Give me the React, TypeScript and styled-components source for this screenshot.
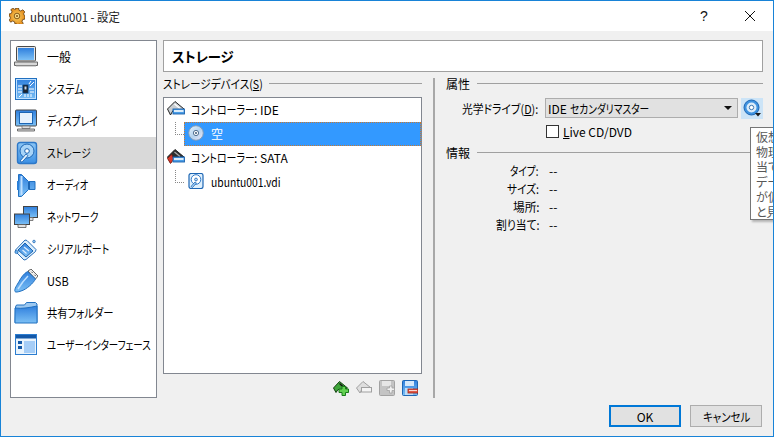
import { FC, ReactNode } from 'react';
import styled, { createGlobalStyle } from 'styled-components';

const GlobalStyle = createGlobalStyle`
  html, body {
    margin: 0;
    padding: 0;
    background: #f0f0f0;
  }
  * {
    box-sizing: border-box;
  }
  body {
    font-family: "Noto Sans CJK JP", "Noto Sans", sans-serif;
    font-size: 12px;
    font-feature-settings: "palt";
    color: #000;
  }
`;

const Window = styled.div`
  position: relative;
  display: flex;
  flex-direction: column;
  width: 774px;
  height: 437px;
  overflow: hidden;
  border: 1px solid #1883d7;
  background: #f0f0f0;
`;

const TitleBar = styled.div`
  display: flex;
  align-items: center;
  height: 30px;
  padding-left: 8px;
  background: #fff;
`;

const TitleText = styled.span`
  flex: 1;
  margin-left: 5px;
  font-size: 12px;
  color: #222;
`;

const CaptionButton = styled.div`
  display: flex;
  align-items: center;
  justify-content: center;
  width: 46px;
  height: 30px;
  font-family: "Liberation Sans", sans-serif;
  font-size: 14px;
  color: #111;
`;

const Content = styled.div`
  display: grid;
  grid-template-columns: 147px 1fr;
  gap: 6px;
  height: 358px;
  margin: 9px 10px 0 9px;
`;

const Sidebar = styled.div`
  background: #fff;
  border: 1px solid #828790;
`;

const SideItem = styled.div<{ $active?: boolean }>`
  display: flex;
  align-items: center;
  height: 32px;
  padding-left: 3px;
  background: ${p => (p.$active ? '#d9d9d9' : 'transparent')};
`;

const SideIcon = styled.span`
  display: block;
  flex: none;
  width: 24px;
  height: 24px;
  margin-right: 9px;
`;

// the reference font has much narrower kana than Noto; $w is the width left in the flow
const Narrow = styled.span<{ $s: number; $w?: number }>`
  display: inline-block;
  ${p => (p.$w ? `width: ${p.$w}px;` : '')}
  white-space: nowrap;
  transform: scaleX(${p => p.$s});
  transform-origin: left center;
`;

const SideLabel = styled(Narrow)`
  margin-bottom: 2px;
`;

const Main = styled.div`
  display: flex;
  flex-direction: column;
  min-width: 0;
`;

const PageTitle = styled.div`
  display: flex;
  align-items: center;
  height: 32px;
  padding-left: 8px;
  background: #fff;
  border: 1px solid #a0a0a0;
  font-size: 14px;
  font-weight: 700;
`;

const Split = styled.div`
  flex: 1;
  display: grid;
  grid-template-columns: 259px 2px 317px;
  column-gap: 11px;
  min-height: 0;
`;

const LeftPane = styled.div`
  display: flex;
  flex-direction: column;
  min-height: 0;
`;

const Separator = styled.div`
  margin-top: 6px;
  background: #a8a8a8;
`;

const RightPane = styled.div`
  display: flex;
  flex-direction: column;
`;

const GroupHeader = styled.div<{ $height?: number; $drop?: number }>`
  display: flex;
  flex: none;
  align-items: center;
  gap: 7px;
  height: ${p => p.$height ?? 25}px;
  padding-bottom: ${p => p.$drop ?? 2}px;
  white-space: nowrap;

  &::after {
    content: '';
    flex: 1;
    height: 1px;
    background: #a0a0a0;
  }
`;

const Tree = styled.div`
  flex: 1;
  background: #fff;
  border: 1px solid #828790;
`;

const TreeRow = styled.div`
  display: flex;
  align-items: center;
  height: 24px;
  padding: 0 0 2px 3px;
  white-space: nowrap;
`;

const ChildRow = styled.div`
  display: flex;
  align-items: flex-start;
  height: 24px;
  padding-left: 11px;
  white-space: nowrap;
`;

const Elbow = styled.span`
  flex: none;
  width: 9px;
  height: 13px;
  border-left: 1px dotted #888;
  border-bottom: 1px dotted #888;
`;

const ChildBody = styled.div<{ $selected?: boolean }>`
  flex: 1;
  display: flex;
  align-items: center;
  height: 24px;
  padding: 0 0 2px 4px;
  background: ${p => (p.$selected ? '#3399ff' : 'transparent')};
  color: ${p => (p.$selected ? '#fff' : '#000')};
  outline: ${p => (p.$selected ? '1px dotted #c9792f' : 'none')};
  outline-offset: -1px;
`;

const ParentIcon = styled.span`
  display: block;
  flex: none;
  width: 18px;
  height: 18px;
  margin-right: 6px;
`;

const ChildIcon = styled.span`
  display: block;
  flex: none;
  width: 16px;
  height: 16px;
  margin-right: 7px;
`;

const ToolRow = styled.div`
  display: flex;
  flex: none;
  justify-content: flex-end;
  align-items: center;
  gap: 7px;
  height: 24px;
  padding: 3px 4px 0 0;
`;

const ToolIcon = styled.span`
  display: block;
  width: 16px;
  height: 16px;
`;

const PropGrid = styled.div`
  display: grid;
  grid-template-columns: 93px 1fr;
  column-gap: 6px;
  align-items: center;
`;

const PropLabel = styled.span`
  text-align: right;
  white-space: nowrap;
`;

const DriveRow = styled.div`
  display: flex;
  align-items: center;
  gap: 3px;
  height: 22px;
`;

const Combo = styled.div`
  flex: 1;
  display: flex;
  align-items: center;
  height: 20px;
  padding: 0 5px 0 2px;
  background: #e1e1e1;
  border: 1px solid #adadad;
  white-space: nowrap;
`;

const ComboText = styled.span`
  flex: 1;
`;

const ComboArrow = styled.span`
  width: 0;
  height: 0;
  border-left: 4px solid transparent;
  border-right: 4px solid transparent;
  border-top: 4px solid #111;
`;

const PickerButton = styled.div`
  display: flex;
  align-items: center;
  justify-content: center;
  flex: none;
  width: 22px;
  height: 21px;
  background: #cce4f7;
`;

const CheckRow = styled.label`
  display: flex;
  align-items: center;
  gap: 4px;
  height: 21px;
  margin: 2px 0 1px;
`;

const CheckBox = styled.span`
  display: block;
  width: 13px;
  height: 13px;
  margin-left: 1px;
  background: #fff;
  border: 1px solid #333;
`;

const Mnemonic = styled.span`
  text-decoration: underline;
`;

const InfoGrid = styled(PropGrid)`
  grid-auto-rows: 18px;
`;

const InfoValue = styled.span`
  padding-left: 4px;
`;

const Tooltip = styled.div`
  position: absolute;
  top: 126px;
  left: 749px;
  width: 60px;
  height: 93px;
  padding: 1px 5px;
  overflow: hidden;
  background: #fff;
  border: 1px solid #767676;
  box-shadow: 2px 2px 2px rgba(0, 0, 0, 0.25);
  color: #575757;
  font-size: 12px;
  line-height: 15px;
  white-space: nowrap;
`;

const Footer = styled.div`
  display: flex;
  justify-content: flex-end;
  gap: 9px;
  margin: 7px 11px 0 0;
`;

const Button = styled.div<{ $primary?: boolean }>`
  display: flex;
  align-items: center;
  justify-content: center;
  width: 72px;
  height: 22px;
  background: #e1e1e1;
  border: ${p => (p.$primary ? '2px solid #0078d7' : '1px solid #adadad')};
`;

const Defs = styled.svg`
  display: block;
  width: 0;
  height: 0;
`;

const Svg: FC<{ size?: number; children: ReactNode }> = ({ size = 24, children }) => (
  <svg width={size} height={size} viewBox={`0 0 ${size} ${size}`} style={{ display: 'block' }}>
    {children}
  </svg>
);

const G = 'url(#blueGrad)';
const L = 'url(#lightGrad)';

const GearIcon = () => (
  <Svg size={16}>
    <path
      d="M6.500 0h3l.5 2.200 1.800.8L13.800 1.800l2 2-1.200 2 .8 1.800 .6 .4v3l-2.200 .5-.8 1.800 1.200 2-2 2-2-1.200-1.800 .8L8 16H6l-.5-2.200-1.800-.8-2 1.200-1.500-2 1.200-2L1 8.400 0 8V6l2.200-.5.8-1.800-1.200-2 2-1.500 2 1.200L7 1z"
      fill="url(#gearGrad)"
      stroke="#5e3b0c"
      strokeWidth="0.8"
    />
    <circle cx="8" cy="8" r="2.800" fill="#f9e08c" stroke="#7a4c10" strokeWidth="0.9" />
    <circle cx="8" cy="8" r="1.100" fill="#8f5a16" />
  </Svg>
);

const LaptopIcon = () => (
  <Svg>
    <rect x="2.500" y="1.500" width="19" height="14.500" rx="1" fill="#e6e6e6" stroke="#4a4a4a" />
    <rect x="4" y="3" width="16" height="12" fill={G} />
    <path d="M0.500 17h23v3.500H0.500z" fill="#d8d8d8" stroke="#666" />
    <path d="M2 21h20" stroke="#aaa" />
  </Svg>
);

const SystemIcon = () => (
  <Svg>
    <rect x="1.500" y="1.500" width="21" height="21" fill={G} stroke="#2170c0" />
    <rect x="2.500" y="2.500" width="19" height="19" fill="none" stroke="#bfe0ff" />
    <rect x="9" y="8" width="5" height="8" fill="#1c2430" stroke="#0c3c70" strokeWidth="0.8" />
    <rect x="10.500" y="9.500" width="2" height="3" fill="#c9d6e4" />
    <path d="M4 9h4M4 12h4M4 15h4M15 12h5M16 9l4-4M16 15h4M15 7l2-3M5 20l3-3M14 17v3M17 17v3M11 17v3" stroke="#fff" />
  </Svg>
);

const DisplayIcon = () => (
  <Svg>
    <rect x="1.500" y="1" width="21" height="16" rx="1" fill={G} stroke="#4a4a4a" />
    <rect x="5.500" y="3.500" width="13" height="11" fill="#e6f2fd" stroke="#1d66b4" />
    <path d="M8 17h8v2.500H8z" fill="#ddd" stroke="#777" strokeWidth="0.8" />
    <path d="M3.500 20h17v2h-17z" fill="#d8d8d8" stroke="#555" strokeWidth="0.8" />
  </Svg>
);

const DiskIcon = () => (
  <Svg>
    <rect x="3.500" y="1.500" width="19" height="21" rx="2.500" fill={L} stroke="#2d78c8" strokeWidth="1.400" />
    <circle cx="13" cy="10" r="7" fill="#a8d4f8" stroke="#1d66b4" />
    <circle cx="13" cy="10" r="2.300" fill="#fff" stroke="#1d66b4" />
    <path d="M6 20l6-7 2 1.600-6 6.600z" fill="#e8f3fd" stroke="#1d66b4" strokeWidth="0.9" />
  </Svg>
);

const PaleDiskIcon = () => (
  <Svg size={16}>
    <rect x="1" y="0.500" width="14" height="15" rx="2" fill="#dff0fd" stroke="#1d66b4" strokeWidth="1.200" />
    <circle cx="8" cy="6.500" r="4.800" fill="#fff" stroke="#2d78c8" />
    <circle cx="8" cy="6.500" r="1.400" fill="#bfe0fb" stroke="#1d66b4" strokeWidth="0.8" />
    <path d="M3 13.500l4-4.500 1.500 1-4 4.500z" fill="#a8d4f8" stroke="#1d66b4" strokeWidth="0.8" />
  </Svg>
);

const AudioIcon = () => (
  <Svg>
    <path d="M4.500 1.500h3l7 7h6.500v8h-6.500l-7 7h-3z" fill={G} stroke="#2170c0" />
    <rect x="6.500" y="3" width="2" height="19" fill="#bfe0ff" />
    <rect x="14" y="9" width="2" height="7" fill="#1d66b4" />
    <rect x="3" y="8" width="2" height="9" fill="#2c80d8" />
  </Svg>
);

const NetworkIcon = () => (
  <Svg>
    <rect x="9.500" y="1.500" width="14" height="11" fill={G} stroke="#444" />
    <path d="M14 12.500h5v3h-5z" fill="#ddd" stroke="#666" strokeWidth="0.8" />
    <rect x="0.500" y="9" width="15" height="10.500" fill={G} stroke="#444" />
    <path d="M4 19.500h8v3H4z" fill="#e2e2e2" stroke="#555" strokeWidth="0.8" />
  </Svg>
);

const SerialIcon = () => (
  <Svg>
    <path d="M1.500 13L11 3l2 .5 9 9-.5 2-9.500 8-2 .5-8-8z" fill="#dbeefc" stroke="#2b6fb8" />
    <path d="M4 13l7-7 8 8-7 6z" fill={G} stroke="#1c62ad" />
    <circle cx="2.500" cy="15" r="1.600" fill="#6bb2ef" stroke="#1c62ad" strokeWidth="0.7" />
    <circle cx="20" cy="4.500" r="1.300" fill="#8dc5f2" stroke="#1c62ad" strokeWidth="0.7" />
    <path d="M10 10l5 4M8.500 13l4 3.500" stroke="#d8ecff" strokeWidth="1.400" />
  </Svg>
);

const UsbIcon = () => (
  <Svg>
    <path d="M14 2l3-2 7 7-2.500 3z" fill="#eee" stroke="#555" strokeWidth="0.9" />
    <path d="M17.500 2.800l1 1M20.500 5.800l1 1" stroke="#333" />
    <path d="M13.500 2.500l8 7.500c-2 4-9 10.500-14.500 12C4 23 1.500 23.500 1 22.500 0 20 3 16 5 12.500 7 8.500 10 4.500 13.500 2.500z" fill={G} stroke="#2170c0" />
    <path d="M4 20c3-5 6-9 10-13" stroke="#bfe0ff" strokeWidth="1.500" fill="none" />
  </Svg>
);

const FolderIcon = () => (
  <Svg>
    <path d="M1.500 6l1-2h8l2-2.500h9L23 3v18.500H1z" fill="#9cc8f0" stroke="#2170c0" />
    <path d="M1 7c7 1 15-.5 22-2v17H1z" fill={G} stroke="#2170c0" />
  </Svg>
);

const UiIcon = () => (
  <Svg>
    <rect x="1.500" y="1.500" width="21" height="20" fill="#eaf4fd" stroke="#2c7dd0" />
    <rect x="2" y="2" width="20" height="3.500" fill="#1358a8" />
    <rect x="10" y="8" width="11" height="12" fill="#a5cdf7" />
    <rect x="4" y="8" width="4" height="3" fill="#1358a8" />
    <rect x="4" y="13" width="4" height="3" fill="#1358a8" />
  </Svg>
);

const ControllerIcon = ({ dark }: { dark?: boolean }) => (
  <Svg size={18}>
    <path d="M0.500 9L8 1.500l9 7.500-5 1.500H6L3.500 15z" fill={dark ? '#2e2e2e' : '#c9ced2'} stroke="#222" />
    <path d="M7.500 4l5.500 4.500" stroke={dark ? '#aaa' : '#fff'} strokeWidth="1.300" />
    {dark && <path d="M0.500 10.500l4-4 2.500 4.500-3.500 4.500z" fill="#d8382a" stroke="#7c1d12" strokeWidth="0.8" />}
    <rect x="6" y="9" width="11.500" height="5" fill="#4b9de6" stroke="#1c62ad" strokeWidth="0.9" />
    <rect x="7" y="10.200" width="9.500" height="1.600" fill="#fff" />
  </Svg>
);

const TreeCdIcon = () => (
  <Svg size={16}>
    <circle cx="8" cy="8" r="7.300" fill="url(#cdGrad)" stroke="#7f9cba" />
    <circle cx="8" cy="8" r="2.600" fill="#fff" stroke="#3e5f82" strokeWidth="0.9" />
    <circle cx="8" cy="8" r="0.900" fill="#2b4a6a" />
  </Svg>
);

const PickerCdIcon = () => (
  <Svg size={18}>
    <circle cx="8.500" cy="8.500" r="7.500" fill="#3f93e0" stroke="#1d66b4" />
    <circle cx="8.500" cy="8.500" r="5" fill="#dcecf9" />
    <circle cx="8.500" cy="8.500" r="2.200" fill="#fff" stroke="#2a6aa8" strokeWidth="0.9" />
    <path d="M12 14h6l-3 3.500z" fill="#1a1a1a" />
  </Svg>
);

const AddControllerIcon = () => (
  <Svg size={16}>
    <path d="M0.500 8l6-6.500 8 6.500-4 1.500H5l-2 3z" fill="#3fa63a" stroke="#123f10" />
    <path d="M6.500 3.500l5 4.500" stroke="#111" strokeWidth="1.400" />
    <path d="M9 6.500h3.500v2.500h3v3.500h-3v3H9v-3H6V9h3z" fill="#63d151" stroke="#1a7a1c" />
  </Svg>
);

const GreyControllerIcon = () => (
  <Svg size={16}>
    <path d="M0.500 8l6.500-6.500 7.500 6-4 1.500H6l-2 4z" fill="#dedede" stroke="#a0a0a0" />
    <rect x="5.500" y="7.500" width="10" height="4.500" fill="#f4f4f4" stroke="#a0a0a0" />
  </Svg>
);

const GreyAddDiskIcon = () => (
  <Svg size={16}>
    <rect x="0.500" y="0.500" width="15" height="15" rx="1" fill="#c4c4c4" stroke="#a2a2a2" />
    <rect x="3" y="1" width="9" height="5" fill="#e6e6e6" />
    <path d="M8 8h2.500V6H13v2h2.500v2.500H13V13h-2.500v-2.500H8z" fill="#f1f1f1" stroke="#a2a2a2" strokeWidth="0.8" />
  </Svg>
);

const RemoveDiskIcon = () => (
  <Svg size={16}>
    <rect x="0.500" y="0.500" width="15" height="15" rx="1" fill={G} stroke="#1d66b4" />
    <rect x="3" y="1" width="9" height="5" fill="#d5e8fa" />
    <rect x="3" y="8" width="8" height="7" fill="#bcdcf7" />
    <rect x="6" y="9" width="10" height="4" fill="#e05a48" stroke="#a11f12" strokeWidth="0.8" />
    <rect x="7" y="10" width="8" height="1" fill="#f9d7d2" />
  </Svg>
);

const sections: { label: string; icon: ReactNode; scale: number; active?: boolean }[] = [
  { label: '一般', icon: <LaptopIcon />, scale: 1 },
  { label: 'システム', icon: <SystemIcon />, scale: 0.84 },
  { label: 'ディスプレイ', icon: <DisplayIcon />, scale: 0.81 },
  { label: 'ストレージ', icon: <DiskIcon />, scale: 0.81, active: true },
  { label: 'オーディオ', icon: <AudioIcon />, scale: 0.77 },
  { label: 'ネットワーク', icon: <NetworkIcon />, scale: 0.81 },
  { label: 'シリアルポート', icon: <SerialIcon />, scale: 0.82 },
  { label: 'USB', icon: <UsbIcon />, scale: 0.92 },
  { label: '共有フォルダー', icon: <FolderIcon />, scale: 0.86 },
  { label: 'ユーザーインターフェース', icon: <UiIcon />, scale: 0.79 },
];

const infoRows = [
  { label: 'タイプ:', scale: 0.8, width: 29 },
  { label: 'サイズ:', scale: 0.89, width: 32 },
  { label: '場所:', scale: 0.97, width: 26 },
  { label: '割り当て:', scale: 0.9, width: 43 },
];

const InfoRow: FC<{ label: string; scale: number; width: number }> = ({ label, scale, width }) => (
  <>
    <PropLabel>
      <Narrow $s={scale} $w={width}>{label}</Narrow>
    </PropLabel>
    <InfoValue>--</InfoValue>
  </>
);

export default function App() {
  return (
    <>
      <GlobalStyle />
      <Defs>
        <defs>
          <linearGradient id="blueGrad" x1="0" y1="0" x2="0" y2="1">
            <stop offset="0" stopColor="#2f7fdd" />
            <stop offset="1" stopColor="#7cc0f5" />
          </linearGradient>
          <linearGradient id="lightGrad" x1="0" y1="0" x2="0" y2="1">
            <stop offset="0" stopColor="#8cc6f5" />
            <stop offset="1" stopColor="#3a8fe4" />
          </linearGradient>
          <radialGradient id="gearGrad">
            <stop offset="0" stopColor="#fcd765" />
            <stop offset="1" stopColor="#e38a1c" />
          </radialGradient>
          <linearGradient id="cdGrad" x1="0" y1="0" x2="1" y2="1">
            <stop offset="0" stopColor="#e8f3fc" />
            <stop offset="0.5" stopColor="#b5d4ef" />
            <stop offset="1" stopColor="#efe6f5" />
          </linearGradient>
        </defs>
      </Defs>
      <Window>
        <TitleBar>
          <GearIcon />
          <TitleText>
            <Narrow $s={0.95}>ubuntu001 - 設定</Narrow>
          </TitleText>
          <CaptionButton>?</CaptionButton>
          <CaptionButton>
            <svg width="10" height="10" viewBox="0 0 10 10">
              <path d="M0 0l10 10M10 0L0 10" stroke="#111" strokeWidth="1" />
            </svg>
          </CaptionButton>
        </TitleBar>
        <Content>
          <Sidebar>
            {sections.map(s => (
              <SideItem key={s.label} $active={s.active}>
                <SideIcon>{s.icon}</SideIcon>
                <SideLabel $s={s.scale}>{s.label}</SideLabel>
              </SideItem>
            ))}
          </Sidebar>
          <Main>
            <PageTitle>
              <Narrow $s={0.95}>ストレージ</Narrow>
            </PageTitle>
            <Split>
              <LeftPane>
                <GroupHeader>
                  <Narrow $s={0.885} $w={99}>
                    ストレージデバイス(<Mnemonic>S</Mnemonic>)
                  </Narrow>
                </GroupHeader>
                <Tree>
                  <TreeRow>
                    <ParentIcon><ControllerIcon /></ParentIcon>
                    <Narrow $s={0.83} $w={63}>コントローラー</Narrow>: IDE
                  </TreeRow>
                  <ChildRow>
                    <Elbow />
                    <ChildBody $selected>
                      <ChildIcon><TreeCdIcon /></ChildIcon>
                      空
                    </ChildBody>
                  </ChildRow>
                  <TreeRow>
                    <ParentIcon><ControllerIcon dark /></ParentIcon>
                    <Narrow $s={0.83} $w={63}>コントローラー</Narrow>: SATA
                  </TreeRow>
                  <ChildRow>
                    <Elbow />
                    <ChildBody>
                      <ChildIcon><PaleDiskIcon /></ChildIcon>
                      <Narrow $s={0.86}>ubuntu001.vdi</Narrow>
                    </ChildBody>
                  </ChildRow>
                </Tree>
                <ToolRow>
                  <ToolIcon><AddControllerIcon /></ToolIcon>
                  <ToolIcon><GreyControllerIcon /></ToolIcon>
                  <ToolIcon><GreyAddDiskIcon /></ToolIcon>
                  <ToolIcon><RemoveDiskIcon /></ToolIcon>
                </ToolRow>
              </LeftPane>
              <Separator />
              <RightPane>
                <GroupHeader>
                  <span>属性</span>
                </GroupHeader>
                <PropGrid>
                  <PropLabel>
                    <Narrow $s={0.9} $w={77}>
                      光学ドライブ(<Mnemonic>D</Mnemonic>):
                    </Narrow>
                  </PropLabel>
                  <DriveRow>
                    <Combo>
                      <ComboText>
                        IDE <Narrow $s={0.81}>セカンダリマスター</Narrow>
                      </ComboText>
                      <ComboArrow />
                    </Combo>
                    <PickerButton><PickerCdIcon /></PickerButton>
                  </DriveRow>
                  <span />
                  <CheckRow>
                    <CheckBox />
                    <span><Mnemonic>L</Mnemonic>ive CD/DVD</span>
                  </CheckRow>
                </PropGrid>
                <GroupHeader $height={18} $drop={0}>
                  <span>情報</span>
                </GroupHeader>
                <InfoGrid>
                  {infoRows.map(row => (
                    <InfoRow key={row.label} label={row.label} scale={row.scale} width={row.width} />
                  ))}
                </InfoGrid>
              </RightPane>
            </Split>
          </Main>
        </Content>
        <Footer>
          <Button $primary>OK</Button>
          <Button>
            <Narrow $s={0.87} $w={46}>キャンセル</Narrow>
          </Button>
        </Footer>
        <Tooltip>
          仮想<br />
          物理<br />
          当て<br />
          デー<br />
          が仮<br />
          と見
        </Tooltip>
      </Window>
    </>
  );
}
